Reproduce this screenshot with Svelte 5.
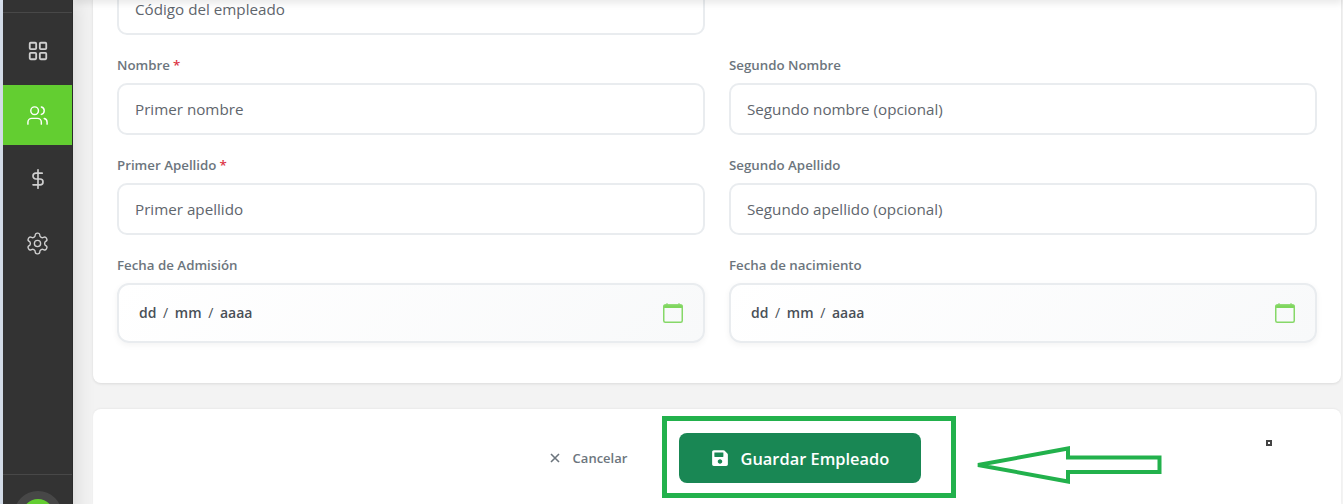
<script>
  const rows = [
    [{ label: 'Nombre', req: true, ph: 'Primer nombre' }, { label: 'Segundo Nombre', ph: 'Segundo nombre (opcional)' }],
    [{ label: 'Primer Apellido', req: true, ph: 'Primer apellido' }, { label: 'Segundo Apellido', ph: 'Segundo apellido (opcional)' }]
  ];
  const dates = ['Fecha de Admisión', 'Fecha de nacimiento'];
</script>

<div class="page">
  <aside class="sidebar">
    <div class="brand"></div>
    <nav class="nav">
      <div class="item">
        <svg class="i-grid" viewBox="0 0 24 24"><rect x="3" y="3" width="7" height="7" rx="1"/><rect x="14" y="3" width="7" height="7" rx="1"/><rect x="14" y="14" width="7" height="7" rx="1"/><rect x="3" y="14" width="7" height="7" rx="1"/></svg>
      </div>
      <div class="item active">
        <svg class="i-users" viewBox="0 0 24 24"><path d="M16 21v-2a4 4 0 0 0-4-4H6a4 4 0 0 0-4 4v2"/><circle cx="9" cy="7" r="4"/><path d="M22 21v-2a4 4 0 0 0-3-3.87"/><path d="M16 3.13a4 4 0 0 1 0 7.75"/></svg>
      </div>
      <div class="item">
        <svg class="i-dollar" viewBox="0 0 24 24"><line x1="12" y1="1" x2="12" y2="23"/><path d="M17 5H9.5a3.5 3.5 0 0 0 0 7h5a3.5 3.5 0 0 1 0 7H6"/></svg>
      </div>
      <div class="item">
        <svg class="i-gear" viewBox="0 0 24 24"><path d="M12.22 2h-.44a2 2 0 0 0-2 2v.18a2 2 0 0 1-1 1.73l-.43.25a2 2 0 0 1-2 0l-.15-.08a2 2 0 0 0-2.73.73l-.22.38a2 2 0 0 0 .73 2.73l.15.1a2 2 0 0 1 1 1.72v.51a2 2 0 0 1-1 1.74l-.15.09a2 2 0 0 0-.73 2.73l.22.38a2 2 0 0 0 2.73.73l.15-.08a2 2 0 0 1 2 0l.43.25a2 2 0 0 1 1 1.73V20a2 2 0 0 0 2 2h.44a2 2 0 0 0 2-2v-.18a2 2 0 0 1 1-1.73l.43-.25a2 2 0 0 1 2 0l.15.08a2 2 0 0 0 2.73-.73l.22-.39a2 2 0 0 0-.73-2.73l-.15-.08a2 2 0 0 1-1-1.74v-.5a2 2 0 0 1 1-1.74l.15-.09a2 2 0 0 0 .73-2.73l-.22-.38a2 2 0 0 0-2.73-.73l-.15.08a2 2 0 0 1-2 0l-.43-.25a2 2 0 0 1-1-1.73V4a2 2 0 0 0-2-2z"/><circle cx="12" cy="12" r="3"/></svg>
      </div>
    </nav>
    <div class="foot"><div class="avatar"></div></div>
  </aside>

  <main class="main">
    <section class="card form">
      <div class="first"><input class="input" placeholder="Código del empleado" /></div>
      <div class="spacer"></div>
      {#each rows as row}
        {#each row as f}
          <div class="field">
            <label class="label">{f.label}{#if f.req}<span class="req">*</span>{/if}</label>
            <input class="input" placeholder={f.ph} />
          </div>
        {/each}
      {/each}
      {#each dates as d}
        <div class="field">
          <label class="label">{d}</label>
          <div class="date">
            <span class="dtext">dd <i>/</i> mm <i>/</i> aaaa</span>
            <svg class="cal" viewBox="0 0 20 20" width="20" height="20"><path d="M4 0v2M16 0v2" fill="none" stroke="#86d868" stroke-width="1"/><path d="M2 1.5h16a1.5 1.5 0 0 1 1.5 1.5v2H.5V3A1.5 1.5 0 0 1 2 1.5z" fill="#7ed65c"/><rect x=".75" y="2" width="18.5" height="17.25" rx="1.5" fill="none" stroke="#86d868" stroke-width="1.5"/></svg>
          </div>
        </div>
      {/each}
    </section>

    <section class="card actions">
      <button class="cancel">
        <svg viewBox="0 0 12 12" width="12" height="12"><path d="M2 2l8 8M10 2l-8 8" stroke="#6c757d" stroke-width="1.6" fill="none"/></svg>
        Cancelar
      </button>
      <button class="save">
        <svg viewBox="0 0 448 512" width="16" height="18"><path fill="#fff" d="M433.941 129.941l-83.882-83.882A48 48 0 0 0 316.118 32H48C21.49 32 0 53.49 0 80v352c0 26.51 21.49 48 48 48h352c26.51 0 48-21.49 48-48V163.882a48 48 0 0 0-14.059-33.941zM224 416c-35.346 0-64-28.654-64-64 0-35.346 28.654-64 64-64s64 28.654 64 64c0 35.346-28.654 64-64 64zm96-304.52V212c0 6.627-5.373 12-12 12H76c-6.627 0-12-5.373-12-12V108c0-6.627 5.373-12 12-12h228.52c3.183 0 6.235 1.264 8.485 3.515l3.48 3.48A11.996 11.996 0 0 1 320 111.48z"/></svg>
        Guardar Empleado
      </button>
    </section>
  </main>

  <div class="topshade"></div>
  <div class="mark-box"></div>
  <svg class="mark-arrow" width="200" height="50" viewBox="970 440 200 50"><path d="M978 465L1068 448.5V457.5H1159.5V472H1068V481.5Z" fill="none" stroke="#22b14c" stroke-width="4"/></svg>
  <div class="mark-dot"></div>
</div>

<style>
  :global(body) { margin: 0; background: #f3f3f3; overflow: hidden; }
  .page {
    position: relative; display: flex; height: 504px; overflow: hidden;
    padding-left: 3px; box-sizing: border-box; background: #f3f3f3;
    font-family: "Open Sans", "Noto Sans", sans-serif;
  }
  .page::before { content: ""; position: absolute; left: 0; top: 0; bottom: 0; width: 3px; background: #dce5f2; }
  .sidebar {
    width: 70px; flex: none; height: 540px; background: #333; display: flex; flex-direction: column;
    border-right: 1px solid #2b2b2b; box-sizing: border-box; box-shadow: 2px 0 20px rgba(0,0,0,.12); z-index: 1;
  }
  .brand { height: 12px; border-bottom: 1px solid #484848; flex: none; }
  .nav { display: flex; flex-direction: column; gap: 4px; padding-top: 8px; }
  .item { height: 60px; display: flex; align-items: center; justify-content: center; }
  .item svg { fill: none; stroke: #cfcfcf; stroke-linecap: round; stroke-linejoin: round; }
  .i-grid { width: 22px; height: 22px; stroke-width: 2; }
  .i-users { width: 23px; height: 23px; stroke-width: 1.5; }
  .i-dollar { width: 20px; height: 20px; stroke-width: 2; }
  .i-gear { width: 25px; height: 25px; stroke-width: 1.3; }
  .item.active { background: #63ce31; }
  .item.active svg { stroke: #fff; }
  .foot { margin-top: auto; height: 66px; border-top: 1px solid #484848; box-sizing: border-box; padding-top: 24px; }
  .avatar { width: 32px; height: 32px; margin: 0 auto; border-radius: 50%; background: #63ce31; box-shadow: 0 0 0 8px rgba(255,255,255,.1); }
  .main { flex: 1; min-width: 0; padding: 0 2px 0 20px; display: flex; flex-direction: column; gap: 26px; }
  .card { background: #fff; border-radius: 0 0 8px 8px; box-shadow: 0 1px 3px rgba(0,0,0,.1); }
  .form {
    margin-top: -40px; height: 423px; box-sizing: border-box; padding: 23px 24px 0;
    display: grid; grid-template-columns: 588px 588px; column-gap: 24px; align-content: start; row-gap: 0;
  }
  .first { height: 52px; }
  .spacer { height: 52px; }
  .field { display: flex; flex-direction: column; height: 100px; }
  .label { display: block; flex: none; height: 48px; box-sizing: border-box; padding-top: 21px; font-size: 13.3px; font-weight: 600; line-height: 18px; color: #6c757d; }
  .req { color: #dc3545; margin-left: 3px; }
  .input {
    display: block; width: 100%; height: 52px; flex: none; box-sizing: border-box; padding: 0 16px;
    border: 2px solid #e9ecef; border-radius: 10px; background: #fff; outline: none;
    font: 400 15.2px "Open Sans", "Noto Sans", sans-serif; color: #495057;
  }
  .input::placeholder { color: #5f666d; opacity: 1; }
  .date {
    height: 60px; flex: none; box-sizing: border-box; padding: 0 20px; border: 2px solid #e9ecef; border-radius: 12px;
    background: linear-gradient(135deg, #fff, #f8f9fa); box-shadow: 0 2px 6px rgba(0,0,0,.05);
    display: flex; align-items: center; justify-content: space-between;
  }
  .dtext { font-size: 14px; font-weight: 600; color: #495057; white-space: pre; padding-bottom: 2px; }
  .dtext i { font-style: normal; font-weight: 400; margin: 0 3px; }
  .cal { flex: none; }
  .actions {
    flex: 1; border-radius: 8px 8px 0 0; display: flex; justify-content: center; align-items: flex-start;
    padding: 24px 0 0 36px; gap: 52px; box-shadow: 0 -1px 2px rgba(0,0,0,.04);
  }
  button { font-family: inherit; border: none; cursor: pointer; display: flex; align-items: center; }
  .cancel { background: none; height: 50px; gap: 12px; color: #6c757d; font-size: 13px; font-weight: 600; padding: 0; }
  .save { background: #198754; color: #fff; width: 242px; height: 50px; border-radius: 8px; font-size: 16.4px; font-weight: 600; justify-content: center; gap: 13px; padding: 0; }
  .topshade { position: absolute; left: 73px; right: 0; top: -8px; height: 8px; box-shadow: 0 2px 8px rgba(0,0,0,.12); }
  .mark-box { position: absolute; left: 662px; top: 416px; width: 294px; height: 82px; box-sizing: border-box; border: 5px solid #22b14c; }
  .mark-arrow { position: absolute; left: 970px; top: 440px; }
  .mark-dot { position: absolute; left: 1266px; top: 440px; width: 6px; height: 6px; box-sizing: border-box; border: 2px solid #444; background: #fff; }
</style>
